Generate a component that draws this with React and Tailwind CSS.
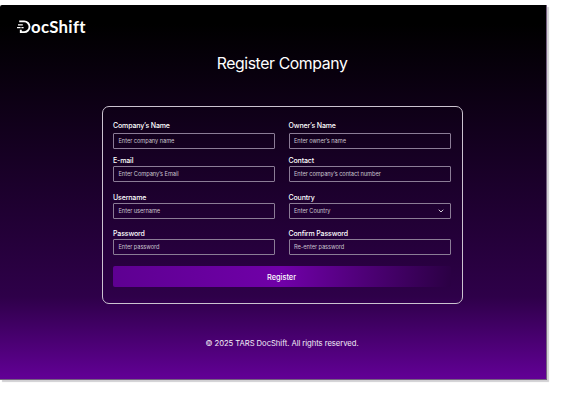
import { ChevronDown } from "lucide-react";

function Logo() {
  return (
    <div className="flex h-4 items-start text-white" aria-label="DocShift">
      <svg className="h-4 w-[14px] shrink-0" viewBox="0 0 14 16" fill="none" stroke="currentColor" strokeWidth="1.9">
        <path d="M2.2 2.4H7.2a5.3 5.3 0 0 1 0 10.7H3.8V10.8" />
        <path d="M1 5.8H5.8M0 8.6H3.6M4.4 8.6H6.6" strokeWidth="1.3" />
      </svg>
      <span className="whitespace-nowrap font-['Lato',sans-serif] text-[16.8px] leading-4 font-bold tracking-[0.28px]">ocShift</span>
    </div>
  );
}

function Field({ label, placeholder, labelClass = "", select = false }) {
  return (
    <label className="flex flex-col">
      <span className={`block h-[10px] whitespace-nowrap text-[7px] font-medium tracking-[-0.14px] text-white ${labelClass}`}>
        {label}
      </span>
      <span className="flex h-4 items-center justify-between rounded-[1px] border border-[#8b7c96] pr-[5px] pl-[4.5px] text-[5.7px] leading-[8px] tracking-[-0.06px] text-[#c9c2ce]">
        <span className="whitespace-nowrap">{placeholder}</span>
        {select && <ChevronDown className="size-2 text-white" strokeWidth={2.4} />}
      </span>
    </label>
  );
}

export default function App() {
  return (
    <div className="h-[400px] w-[565px] overflow-hidden bg-white pt-[5px] font-['Inter',sans-serif]">
      <main className="flex h-[375px] w-[547px] flex-col rounded-tl-[2px] border-r border-b border-[#756080] bg-linear-to-b/srgb from-black from-5% via-[#2e0049] via-78% to-[#620096] shadow-[2px_2px_1px_#d1d0d3]">
        <header className="h-[43px] pt-[14px] pl-[17px]">
          <Logo />
        </header>
        <h1 className="ml-[18px] h-[58px] text-center text-[15.8px] leading-[32px] tracking-[-0.4px] text-white">Register Company</h1>
        <form className="ml-[102px] h-[198px] w-[361px] shrink-0 rounded-[7px] border border-[#cbc3d0] px-[10px] pt-[13px]">
          <div className="grid w-[338px] grid-cols-[162px_162px] gap-x-[13.5px]">
            <Field label="Company’s Name" placeholder="Enter company name" labelClass="mb-[3px] leading-[12px]" />
            <Field label="Owner’s Name" placeholder="Enter owner’s name" labelClass="mb-[3px] leading-[12px]" />
          </div>
          <div className="mt-[6px] grid w-[338px] grid-cols-[162px_162px] gap-x-[13.5px]">
            <Field label="E-mail" placeholder="Enter Company’s Email" labelClass="mb-[1px] leading-[12px]" />
            <Field label="Contact" placeholder="Enter company’s contact number" labelClass="mb-[1px] leading-[12px]" />
          </div>
          <div className="mt-[10px] grid w-[338px] grid-cols-[162px_162px] gap-x-[13.5px]">
            <Field label="Username" placeholder="Enter username" labelClass="mb-[1px] leading-[12px]" />
            <Field label="Country" placeholder="Enter Country" labelClass="mb-[1px] leading-[12px]" select />
          </div>
          <div className="mt-[10px] grid w-[338px] grid-cols-[162px_162px] gap-x-[13.5px]">
            <Field label="Password" placeholder="Enter password" labelClass="leading-[10px]" />
            <Field label="Confirm Password" placeholder="Re-enter password" labelClass="leading-[10px]" />
          </div>
          <button
            type="button"
            className="mt-[11px] block h-[21px] w-[338px] rounded-[2px] bg-linear-to-r/srgb from-[#5e0092] via-[#7000a8] via-50% to-[#2b0044] pr-[1px] text-[7.4px] leading-[23px] font-medium text-white"
          >
            Register
          </button>
        </form>
        <footer className="ml-[18px] pt-[33px] text-center text-[7.7px] leading-[13px] tracking-[-0.06px] text-[#f3ecf7]">
          © 2025 TARS DocShift. All rights reserved.
        </footer>
      </main>
    </div>
  );
}
